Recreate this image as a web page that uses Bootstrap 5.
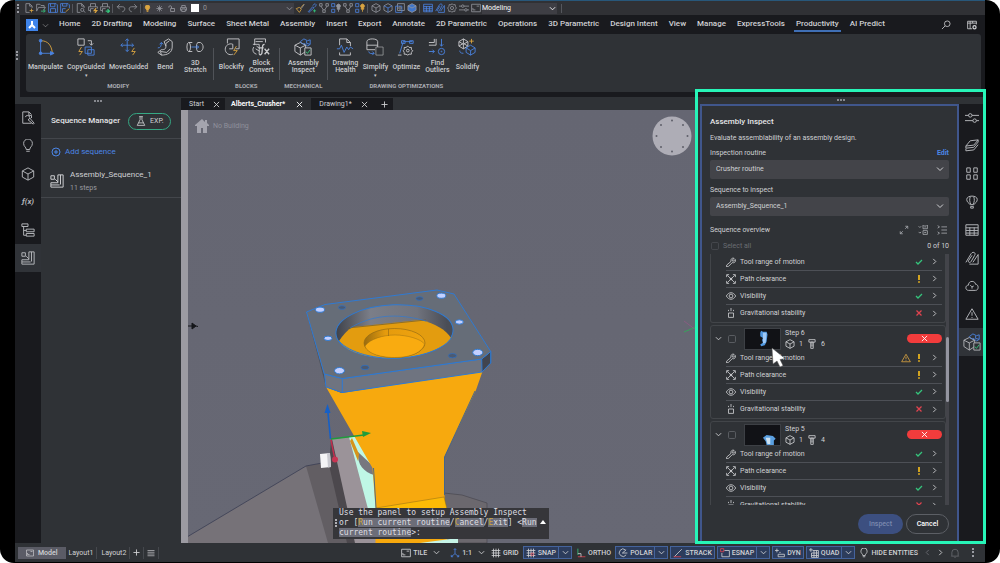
<!DOCTYPE html>
<html lang="en">
<head>
<meta charset="utf-8">
<meta name="viewport" content="width=device-width, initial-scale=1">
<title>Assembly Inspect</title>
<link rel="stylesheet" href="https://cdn.jsdelivr.net/npm/bootstrap@5.3.0/dist/css/bootstrap.min.css">
<style>
:root{--panel:#2f3236;--dark:#191a1e;--line:#43464b;--txt:#d0d1d4;--blue:#4b86e6}
body{font-family:Roboto,"Liberation Sans",sans-serif;font-size:7px;line-height:8px;color:var(--txt);background:#fff}
button,select,input{font:inherit;color:inherit}
button{background:none;border:0;padding:0}
a{color:inherit;text-decoration:none}
.frame{height:100vh;background:#000;border-radius:14px;padding:0 15px 1px;overflow:hidden}
.app{background:var(--panel);border-top:1px solid #28577a}
.ic{width:10px;height:10px;fill:none;stroke:currentColor;stroke-width:1.3;flex:none;display:block}
.ic-l{width:14px;height:14px;stroke-width:1.1}
.ic-xl{width:18px;height:18px;stroke-width:1}
.ic-s{width:7px;height:7px;stroke-width:2}
.bl{stroke:#4b83e0}.ye{stroke:#d9a441}.gr{stroke:#35c47c}.rd{stroke:#e0434f}.am{stroke:#eab41e}
/* quick access bar */
.quick{height:14px;padding-left:2px;background:#303135;color:#93959c}
.quick .ic{margin:0 1px}
.vsep{width:1px;height:9px;background:#55575d;margin:0 2px 0 1px;flex:none}
.grip{width:2px;height:9px;border-left:2px dotted #9a9ca3}
.combo{background:#3e3e44;height:11px}
.combo select{appearance:none;background:none;border:0;padding:0;height:11px;line-height:11px;outline:0}
/* ribbon */
.ribbon-wrap{margin-left:5px;background:var(--dark);height:82px;padding:0 4px 5px 6px}
.tabs{height:19px;padding-top:1px}
.tabs a{padding:0 5px 0 6px;height:16px;line-height:15px;font-size:8px;font-weight:500;white-space:nowrap}
.tabs a.on{box-shadow:inset 0 -2px #3f6fb5;padding:0 2px;margin:0 3px 0 4px}
.applogo{width:12px;height:12px;background:#3f84ea;margin-top:3px}
.ribbon{height:58px;background:var(--panel);border-radius:3px}
.tool{min-width:26px;font-weight:500;line-height:7px;color:#c9cacd}
.tool .lbl{height:14px;margin-top:4px}
.tool .more{height:3px;line-height:3px;font-size:5px}
.tools{gap:4px}
.grp{padding:4px 5px 0;height:58px}
.grp:first-child{padding-left:2px}
.grp+.grp::before{content:"";position:absolute;left:0;top:14px;height:32px;border-left:1px solid #505358}
.grp-name{font-size:6px;line-height:8px;font-weight:700;color:#a9abb1;margin-top:auto;margin-bottom:2px}
/* docks */
.strip{height:7px}
.hgrip{width:8px;border-top:2px dotted #86888e}
.rail{background:var(--dark);color:#b4b6ba}
.rail button{height:28px;width:100%;font-size:8px}
.rail button.on{background:#303338}
.seq{width:140px}
.seq-head{height:35px;border-bottom:1px solid var(--line);padding-left:10px}
h1,h2{font-size:8px;line-height:10px;font-weight:500;margin:0;color:#e4e5e7}
.exp{border:1px solid #36a884;border-radius:9px;height:17px;padding:0 6px 0 7px}
.seq-add{color:var(--blue);height:26px;padding-left:10px;gap:4px;font-size:8px}
.seq-row{height:33px;border-bottom:1px solid var(--line);padding-left:9px;gap:6px}
.seq-name{font-size:8px}
.doctabs{height:13px;padding-top:1px}
.doctabs div{background:var(--dark);height:12px;white-space:nowrap;padding:0 5px 0 8px;gap:9px}
.doctabs .cur{background:#2b2d31;font-weight:700;padding:0 8px 0 6px;gap:11px}
.canvas{background:#656672;border-left:7px solid #9c9ba2}
.scene{inset:0}
.nobuild{color:#8f909b;padding:9px 7px}
.compass{right:4px;top:6px;width:40px;height:40px}
.cmd{left:145px;bottom:4px;background:#36363a;width:216px;height:31px;font-family:"DejaVu Sans Mono",monospace;font-size:8px;line-height:10px;color:#dedee2;white-space:pre;padding:0 0 0 6px}
.cmd mark,.cmd i{background:#6c6d78;color:inherit;padding:0;line-height:9px}
.cmd i{font-style:normal;color:#cba63e}
.cmd .vdots{left:2px;top:11px;height:8px;border-left:2px dotted #b0b0b6}
.cmd .up{right:3px;top:12px}
/* inspect */
.dock{width:289px}
.hilite{inset:-8px -1px -1px -1px;border:3px solid #27f5b8;pointer-events:none;z-index:5}
.inspect{margin-left:4px;width:259px;border:2px solid #40568c;border-bottom:0;padding:11px 8px 9px 8px}
.fld{height:20px;line-height:18px;min-height:0;background-color:#434449;border:0;border-radius:2px;color:var(--txt);font-size:7px;padding:0 16px 0 6px;background-position:right 5px center;background-size:8px 8px;background-image:url("data:image/svg+xml,%3csvg xmlns='http://www.w3.org/2000/svg' viewBox='0 0 16 16'%3e%3cpath fill='none' stroke='%23d0d1d4' stroke-width='2' d='m2 5 6 6 6-6'/%3e%3c/svg%3e")}
.ck{width:8px;height:8px;min-height:0;margin:0;border:1px solid #595c61;border-radius:1px;background:none;flex:none}
.steps{min-height:0}
.step{border:1px solid #424549;border-radius:3px;margin-bottom:2px}
.step.cut{border-top:0;border-radius:0 0 3px 3px}
.step-head{height:24px;padding:2px 3px 0 4px}
.step-head .ck{margin:0 8px 0 6px}
.thumb{width:37px;height:22px;background:#111216;border:1px solid #3d4045;flex:none}
.bad{background:#f23c3c;color:#fff;width:35px;height:9px;border-radius:5px}
.chk{height:17px;margin:0 3px 0 15px;padding:0 4px 0 0;border-bottom:1px solid #4d5056}
.chk:last-child{border-bottom:0}
.chk .st{width:8px;height:8px;margin-right:8px;stroke-width:2.5}
.sbar{width:3px;background:#43444a;position:relative}
.sbar div{position:absolute;top:33%;height:26%;width:3px;background:#9495a0;border-radius:2px}
.pill{height:20px;border-radius:10px;width:45px;font-weight:500}
.pill.go{background:#3c4f80;color:#7b89ae}
.pill.no{border:1px solid #5c5f65;width:43px;color:#fff}
.cursor{left:60px;top:21px;width:16px;height:21px;z-index:3}
/* status bar */
.status{height:19px;white-space:nowrap;font-weight:500;padding:0 11px 0 3px}
.status .lay{height:12px;padding:0 3px;border-right:1px solid #45484d;font-weight:400}
.status .lay.on{background:#5b5c66;font-weight:500;padding:0 8px;border:0}
.tg{height:13px;padding:0 2px;gap:2px}
.tg.on{background:#2c3c5c;border:1px solid #44639c}
.tg .ch{border-left:1px solid #44639c;height:11px;padding:0 2px 0 3px}
</style>
</head>
<body>
<svg width="0" height="0" class="position-absolute" aria-hidden="true"><defs>
<symbol id="down" viewBox="0 0 16 16"><path d="m2 5 6 6 6-6"/></symbol>
<symbol id="right" viewBox="0 0 16 16"><path d="m5 2 6 6-6 6"/></symbol>
<symbol id="left" viewBox="0 0 16 16"><path d="m11 2-6 6 6 6"/></symbol>
<symbol id="x" viewBox="0 0 16 16"><path d="m2 2 12 12M14 2 2 14"/></symbol>
<symbol id="plus" viewBox="0 0 16 16"><path d="M8 1v14M1 8h14"/></symbol>
<symbol id="menu" viewBox="0 0 16 16"><path d="M1 3h14M1 6.500h14M1 10h14M1 13.500h14"/></symbol>
<symbol id="ok" viewBox="0 0 16 16"><path d="m2 8 4 4 8-8"/></symbol>
<symbol id="bang" viewBox="0 0 16 16"><path stroke-width="3.500" d="M8 0v10M8 12.500v3"/></symbol>
<symbol id="no" viewBox="0 0 16 16"><path d="m3 3 10 10M13 3 3 13"/></symbol>
<symbol id="doc" viewBox="0 0 16 16"><path d="M9 1H3v14h6M9 1l4 4v3M9 1v4h4"/><path class="ye" d="M12 9v6M9 12h6"/></symbol>
<symbol id="open" viewBox="0 0 16 16"><path d="M1 13V2h5l2 2h5v3M1 13l3-6h11l-3 5"/><path class="gr" d="M8 13h6M12 10l3 3-3 2"/></symbol>
<symbol id="save" viewBox="0 0 16 16"><path class="bl" d="M1 1h12l2 2v12H1zM4 1v5h7V1M4 15V9h8v6"/></symbol>
<symbol id="saveas" viewBox="0 0 16 16"><path class="bl" d="M9 15H1V1h12l2 2v5M4 1v4h7V1M4 15V9h5"/><path class="ye" d="m9 14 6-5"/></symbol>
<symbol id="find" viewBox="0 0 16 16"><path d="M7 15H2V1h7l4 4v3M9 1v4h4"/><circle cx="10" cy="11" r="2.500"/><path d="m12 13 3 2"/></symbol>
<symbol id="print" viewBox="0 0 16 16"><path d="M4 6V1h8v5M4 12H1V6h14v6h-3M4 9h8v6H4z"/></symbol>
<symbol id="printy" viewBox="0 0 16 16"><path d="M4 6V1h8v5M4 12H1V6h14v3M4 15V9h5"/><path class="ye" stroke-width="2" d="m13 8-3 4h4l-3 4"/></symbol>
<symbol id="printg" viewBox="0 0 16 16"><path d="M4 6V1h8v5M4 12H1V6h14v3M4 15V9h5"/><path class="gr" stroke-width="2" d="M9 13h6m-3-3 3 3-3 3"/></symbol>
<symbol id="undo" viewBox="0 0 16 16"><path d="M6 2 2 6l4 4M2 6h8c6 0 5 7 0 8"/></symbol>
<symbol id="redo" viewBox="0 0 16 16"><path d="m10 2 4 4-4 4M14 6H6c-6 0-5 7 0 8"/></symbol>
<symbol id="bulb" viewBox="0 0 16 16"><path d="M6 12c0-3-3-3-3-7a5 5 0 0 1 10 0c0 4-3 4-3 7zM6 14h4"/></symbol>
<symbol id="bulbon" viewBox="0 0 16 16"><path class="ye" fill="#d9a441" d="M6 12c0-3-3-3-3-7a5 5 0 0 1 10 0c0 4-3 4-3 7zM6 15h4"/></symbol>
<symbol id="sun" viewBox="0 0 16 16"><circle cx="8" cy="8" r="3" fill="currentColor"/><path d="M8 1v3M8 12v3M1 8h3M12 8h3M3 3l2 2M11 11l2 2M13 3l-2 2M5 11l-2 2"/></symbol>
<symbol id="lock" viewBox="0 0 16 16"><path d="M6 8h9v7H6zM8 8V4c0-3-6-3-6 0v2"/></symbol>
<symbol id="brush" viewBox="0 0 16 16"><path class="ye" d="m2 9 5-2 3 3-3 5zM9 8l5-6"/><path d="m10 9 5-7"/></symbol>
<symbol id="pick" viewBox="0 0 16 16"><path class="bl" d="m2 14 7-8 2 2-8 7zM9 4l4-3 2 2-3 4"/><path class="gr" d="M12 10v5M9.500 12.500h5"/></symbol>
<symbol id="tree" viewBox="0 0 16 16"><path d="M1 1h4v4H1zM11 1h4v4h-4zM6 11h4v4H6zM3 5l4 6M13 5l-4 6"/></symbol>
<symbol id="light" viewBox="0 0 16 16"><path class="bl" d="M1 1h5v5H1zM1 10h5v5H1z"/><path d="M12 14v-4M10 7a3 3 0 1 1 4 0v3h-4z" fill="currentColor"/></symbol>
<symbol id="lighty" viewBox="0 0 16 16"><path class="bl" d="M1 1h5v5H1zM1 10h5v5H1z"/><path class="ye" fill="#d9a441" d="M12 14v-4M10 7a3 3 0 1 1 4 0v3h-4z"/></symbol>
<symbol id="cube" viewBox="0 0 16 16"><path d="m8 1 6.500 3.500v7L8 15l-6.500-3.500v-7zM1.500 4.500 8 8l6.500-3.500M8 8v7"/></symbol>
<symbol id="cubeb" viewBox="0 0 16 16"><path d="m8 1 6.500 3.500v7L8 15l-6.500-3.500v-7z"/><path class="bl" d="M1.500 4.500 8 8l6.500-3.500M8 8v7"/></symbol>
<symbol id="boxes" viewBox="0 0 16 16"><path d="M4 1h11v11H4z"/><path class="bl" d="M1 5h10v10H1z"/><circle cx="8" cy="8" r="2"/></symbol>
<symbol id="cubef" viewBox="0 0 16 16"><path d="m8 1 6.500 3.500v7L8 15l-6.500-3.500v-7z" fill="#3f75c9"/><path d="M1.500 4.500 8 8l6.500-3.500"/></symbol>
<symbol id="table" viewBox="0 0 16 16"><path d="M1 2h14v12H1zM1 5.500h14M1 8.500h14M1 11.500h14M5.500 5v9M10.500 5v9"/></symbol>
<symbol id="clips" viewBox="0 0 16 16"><path d="M1 13 7 3c2-3 6-1 4 2l-4 7c-1 2-4 1-3-1l4-6M5 15h10V4l-6 9"/></symbol>
<symbol id="gear" viewBox="0 0 16 16"><circle cx="8" cy="8" r="2.500"/><path d="m8 1 2 2 3-.5.5 3L15 8l-2 2.500-.5 3-3-.5L8 15l-2-2-3 .5-.5-3L1 8l2-2.500.5-3 3 .5z"/></symbol>
<symbol id="sliders" viewBox="0 0 16 16"><path d="M0 5h4M8 5h8M0 11h9M13 11h3"/><circle cx="6" cy="5" r="2"/><circle cx="11" cy="11" r="2"/></symbol>
<symbol id="win" viewBox="0 0 16 16"><path d="M1 2h14v12H1zM3 11V8M3 11h4M13 5H9"/></symbol>
<symbol id="search" viewBox="0 0 16 16"><circle cx="10" cy="6" r="4.500"/><path d="m6.500 9.500-5 5"/></symbol>
<symbol id="uiset" viewBox="0 0 16 16"><path d="M8 14H1V2h14v5M1 5h14M5 5v9M5 2v3M9 2v3"/><circle cx="12" cy="11.500" r="2.500" stroke-width="2"/></symbol>
<symbol id="manip" viewBox="0 0 20 20"><path class="ye" d="M4 3c9 0 12 6 13 13"/><path class="bl" d="M4 4v13h12"/><g fill="#4b83e0" class="bl"><circle cx="4" cy="3" r="1.500"/><circle cx="4" cy="17" r="1.500"/><path d="m15 15 4 2-4 2z"/></g></symbol>
<symbol id="copyg" viewBox="0 0 20 20"><path d="M1 1h7v7H1zM12 3h4v5M14 6l2 2 2-2"/><path class="ye" d="m5 10-3 5h4l-3 4"/><path class="bl" d="M9 10h7v7H9zM12 13h7v6h-7z"/></symbol>
<symbol id="moveg" viewBox="0 0 20 20"><path class="bl" d="M8 1v14M1 8h14M6 3l2-2 2 2M6 13l2 2 2-2M3 6 1 8l2 2M13 6l2 2-2 2"/><path class="ye" d="m16 11-3 4h4l-3 4"/></symbol>
<symbol id="bend" viewBox="0 0 20 20"><path d="m9 4 5-3 4 3v6c0 6-5 9-12 9l-4-3 4-3c4 0 5-1 5-4zM11 9V6l4-3M6 19l-1-4 7 1 4-4"/><path class="bl" d="M2 11c3 0 4-2 4-6M4 7l2-2 2 2"/></symbol>
<symbol id="stretch" viewBox="0 0 20 20"><ellipse cx="3" cy="10" rx="2" ry="5"/><path d="M3 5h4M3 15h4M13 5h3c4 2 4 8 0 10h-3M13 5c-2 2-2 8 0 10"/><path class="bl" d="M6 10h8M12 8l2 2-2 2"/></symbol>
<symbol id="blockify" viewBox="0 0 20 20"><path d="M6 6V1h13v11h-4M12 18a6 6 0 1 1 0-11v5H8"/><path class="ye" d="m16 9-3 5h4l-4 5"/></symbol>
<symbol id="blockc" viewBox="0 0 20 20"><path d="M3 8V1h12v4M1 7h7v11M5 18a5 5 0 0 1-3-8M4 4h8M5 9l4 3M4 12l5 3"/><path stroke-width="1.500" d="M14 7c-3 0-2 2-3 10-1 2-2 2-3 1M8 11h5M14 12l5 6M19 12l-5 6"/></symbol>
<symbol id="inspect" viewBox="0 0 20 20"><path d="m7 5 6 3v7l-6 4-6-4V8zM1 8l6 3 6-3M7 11v8"/><path class="bl" d="m7 4 4-3 4 2 3-1v5l-3 2-3-3-2 1zM14 3v3l4 1"/><path fill="#2f3236" d="M12 11h7v8h-7z"/><path class="gr" d="m13 15 2 2 3-4"/></symbol>
<symbol id="health" viewBox="0 0 20 20"><path d="M4 8V1h8l4 4v4M12 1v4h4M4 16v3h12v-3"/><path class="bl" d="M1 12h3l2-4 3 8 3-6 2 3 2-3 3 2"/></symbol>
<symbol id="simplify" viewBox="0 0 20 20"><path d="M1 13V4c0-4 12-4 12 0v6M1 8h12M1 13h9"/><path d="M11 10h8v9h-8z" opacity=".6"/><path class="bl" d="M3 15c0 2 3 3 6 2M7 15l2 2-2 2"/></symbol>
<symbol id="optimize" viewBox="0 0 20 20"><path class="bl" d="m3 17 4-13h10M5 3h4v3H5zM14 3h4v3h-4z"/><path d="M1 19h4M12 9l1.500 1.500H16V13l1.500 1-1.500 2v2h-2.500L12 19l-2-1H8v-2l-1-2 1-1v-2.500h2z"/><circle cx="12" cy="14" r="1.500"/></symbol>
<symbol id="outliers" viewBox="0 0 20 20"><path d="M1 5h6V1M1 8h8V1"/><path class="bl" d="M15 1v8M13 7l2 2 2-2M1 15h6M5 13l2 2-2 2"/><circle class="bl" cx="15" cy="15" r="3.500"/><circle class="bl" cx="15" cy="15" r=".5"/></symbol>
<symbol id="solidify" viewBox="0 0 20 20"><path d="m6 1 5 3v5l-5 3-5-3V4zM1 4l5 3 5-3M6 7v5M1 9l5-3 5 3M6 1v5"/><path class="ye" d="M15 1v5M12.500 3.500h5"/><path class="bl" d="m14 8 5 3v5l-5 3-5-3v-5zM9 11l5 3 5-3M14 14v5M2 14c0 2 1 3 4 3"/></symbol>
<symbol id="docwr" viewBox="0 0 16 16"><path d="M12 14H2V1h7l3 3M9 1v4h3v3M5 7a2.500 2.500 0 1 1 3 3l6 5 1-1-5-6"/></symbol>
<symbol id="tree2" viewBox="0 0 16 16"><path d="M1 1h7v3H1zM6 7h9v3H6zM6 12h9v3H6zM3 4v10h3M3 8.500h3"/></symbol>
<symbol id="seqi" viewBox="0 0 16 16"><path d="M1 2h4v4H1zM1 10h8V1h6v14H1zM12 1v11M1 12.500h10M6 6l3 3"/></symbol>
<symbol id="layers" viewBox="0 0 16 16"><path d="m6 2 9-1-5 6-9 1zM1 8v2.500l9-1 5-6V1M1 11v2.500l9-1 5-6"/></symbol>
<symbol id="four" viewBox="0 0 16 16"><path d="M2 1h4v5H2zM10 1h4v5h-4zM2 9h4v5H2zM10 9h4v5h-4z"/></symbol>
<symbol id="balloon" viewBox="0 0 16 16"><path d="M6 11C4 9 2 8 2 5c0-5 12-5 12 0 0 3-2 4-4 6zM6 2c-1 3-1 6 1 9M10 2c1 3 1 6-1 9M6.500 13h3v2h-3z"/></symbol>
<symbol id="cloud" viewBox="0 0 16 16"><path d="M4 13c-4 0-4-6 0-6 0-6 8-5 8-1 4 0 4 7 0 7zM6 7l2 2 2-1M8 9v2"/></symbol>
<symbol id="warn" viewBox="0 0 16 16"><path d="M8 2 1 14h14zM8 6v4M8 11.500v1"/></symbol>
<symbol id="flask" viewBox="0 0 16 16"><path d="M5 1h6M6.500 1v5L2 15h12L9.500 6V1M4 11h8"/></symbol>
<symbol id="wrench" viewBox="0 0 16 16"><path d="M1 13 8 7c-1-4 2-6 5-5l-3 3 1 2 4-3c1 4-2 6-5 5l-6 6-3 1z"/></symbol>
<symbol id="path" viewBox="0 0 16 16"><path d="m2 2 12 12M14 2 2 14M1 5V1h4M11 1h4v4M15 11v4h-4M5 15H1v-4"/><circle cx="8" cy="8" r="1.500"/></symbol>
<symbol id="eye" viewBox="0 0 16 16"><path d="M.5 8c4-7 11-7 15 0-4 7-11 7-15 0z"/><circle cx="8" cy="8" r="3"/></symbol>
<symbol id="grav" viewBox="0 0 16 16"><path d="M4 8h8v7H4zM4 5V3M8 5V0M12 5V3"/></symbol>
<symbol id="bolt" viewBox="0 0 16 16"><path d="M3 1h10v4H3zM6 5h4v10H6zM6 8h4M6 11h4"/></symbol>
<symbol id="expand" viewBox="0 0 16 16"><path d="m10 6 4-4M10 2h4v4M6 10l-4 4M2 10v4h4"/></symbol>
<symbol id="expall" viewBox="0 0 16 16"><path d="M8 0h7v6H8zM8 9h7v6H8zM10 3h3M10 12h3M1 2l2 2 2-2M1 11l2 2 2-2"/></symbol>
<symbol id="colall" viewBox="0 0 16 16"><path d="M7 3h9M7 8h9M7 13h9M1 1l3 2-3 2M1 11l3 2-3 2"/></symbol>
<symbol id="axes" viewBox="0 0 16 16"><path class="bl" d="M8 1v8l-6 5M8 9l6 5M6 3l2-2 2 2M2 11v3h3M14 11v3h-3"/></symbol>
<symbol id="grid" viewBox="0 0 16 16"><path d="M4 1v14M8 1v14M12 1v14M1 4h14M1 8h14M1 12h14"/></symbol>
<symbol id="snap" viewBox="0 0 16 16"><path d="M4 1v14M8 1v14M12 1v14M1 4h14M1 8h14M1 12h14"/><circle class="rd" cx="10" cy="10" r="2"/></symbol>
<symbol id="ortho" viewBox="0 0 16 16"><path class="gr" d="M3 1v10"/><path class="rd" d="M3 14h12"/><path d="M3 9h5v5"/></symbol>
<symbol id="polar" viewBox="0 0 16 16"><path d="M13 11a6 6 0 1 1-1-8M7 8h8M7 8l6-5"/></symbol>
<symbol id="strack" viewBox="0 0 16 16"><path d="M2 14 14 2"/><path class="rd" d="M1 14h12"/></symbol>
<symbol id="esnap" viewBox="0 0 16 16"><path d="M7 4h8v10H3V8"/><path class="rd" d="M1 1h5v5H1z"/></symbol>
<symbol id="dyn" viewBox="0 0 16 16"><path d="M3 1v6M0 4h6M5 10h10v4H5zM7 7h2"/></symbol>
<symbol id="quad" viewBox="0 0 16 16"><path d="M3 0v6M0 3h6M6 4h9v11H4V8M4 8h11M8 4v11M12 4v11M4 12h11"/></symbol>
<symbol id="bell" viewBox="0 0 16 16"><path d="M3 12V7a5 5 0 0 1 10 0v5l1 1H2zM7 15h2"/></symbol>
</defs></svg>

<div class="frame">
<div class="app d-flex flex-column h-100">

<div class="quick d-flex align-items-center flex-shrink-0">
  <span class="grip me-1"></span>
  <svg class="ic"><use href="#doc"/></svg><svg class="ic"><use href="#open"/></svg><svg class="ic"><use href="#save"/></svg><svg class="ic"><use href="#saveas"/></svg>
  <span class="vsep"></span>
  <svg class="ic"><use href="#find"/></svg><svg class="ic"><use href="#printy"/></svg><svg class="ic"><use href="#printg"/></svg>
  <span class="vsep"></span>
  <svg class="ic"><use href="#undo"/></svg><svg class="ic"><use href="#redo"/></svg>
  <span class="vsep"></span>
  <div class="combo d-flex align-items-center" style="width:151px">
    <svg class="ic ic-s"><use href="#bulbon"/></svg><svg class="ic ic-s ms-1"><use href="#sun"/></svg><svg class="ic ic-s ms-1"><use href="#lock"/></svg><svg class="ic ic-s mx-1"><use href="#print"/></svg>
    <span class="bg-white me-1" style="width:8px;height:8px"></span>
    <select class="flex-grow-1" aria-label="Layer"><option>0</option></select>
    <svg class="ic ic-s"><use href="#down"/></svg>
  </div>
  <svg class="ic"><use href="#brush"/></svg><svg class="ic"><use href="#pick"/></svg><svg class="ic"><use href="#tree"/></svg><svg class="ic"><use href="#light"/></svg><svg class="ic"><use href="#tree"/></svg><svg class="ic"><use href="#lighty"/></svg>
  <span class="vsep"></span>
  <svg class="ic"><use href="#cube"/></svg><svg class="ic"><use href="#cubeb"/></svg><svg class="ic"><use href="#boxes"/></svg><svg class="ic"><use href="#cubef"/></svg>
  <span class="vsep"></span>
  <svg class="ic bl"><use href="#table"/></svg><svg class="ic bl"><use href="#clips"/></svg><svg class="ic"><use href="#gear"/></svg><svg class="ic"><use href="#sliders"/></svg><svg class="ic"><use href="#win"/></svg>
  <div class="combo d-flex align-items-center text-light" style="width:75px">
    <select class="flex-grow-1 w-100" aria-label="Workspace"><option>Modeling</option></select>
    <svg class="ic ic-s"><use href="#down"/></svg>
  </div>
  <span class="vsep ms-1"></span>
</div>

<div class="position-relative flex-shrink-0">
<span class="grip position-absolute" style="left:1px;top:36px"></span>
<div class="ribbon-wrap">
  <nav class="tabs d-flex">
    <button class="applogo d-flex align-items-center justify-content-center" aria-label="Application menu"><svg class="ic text-white" style="stroke-width:2"><path d="M5 1v4L2 8M5 5l3 3"/></svg></button>
    <svg class="ic ic-s m-1 me-0 align-self-center" style="stroke-width:1"><use href="#down"/></svg>
    <a href="#" class="ms-1">Home</a><a href="#">2D Drafting</a><a href="#">Modeling</a><a href="#">Surface</a><a href="#">Sheet Metal</a><a href="#">Assembly</a><a href="#">Insert</a><a href="#">Export</a><a href="#">Annotate</a><a href="#">2D Parametric</a><a href="#">Operations</a><a href="#">3D Parametric</a><a href="#">Design Intent</a><a href="#">View</a><a href="#">Manage</a><a href="#">ExpressTools</a><a href="#" class="on">Productivity</a><a href="#">AI Predict</a>
    <span class="ms-auto d-flex align-items-center gap-3 pe-1"><svg class="ic"><use href="#search"/></svg><svg class="ic"><use href="#uiset"/></svg></span>
  </nav>
  <div class="ribbon d-flex text-center">
    <div class="grp position-relative d-flex flex-column">
      <div class="tools d-flex">
        <button class="tool"><svg class="ic ic-xl mx-auto"><use href="#manip"/></svg><span class="lbl d-flex align-items-center justify-content-center">Manipulate</span></button>
        <button class="tool"><svg class="ic ic-xl mx-auto"><use href="#copyg"/></svg><span class="lbl d-flex align-items-center justify-content-center position-relative">CopyGuided<span class="position-absolute more top-100">▾</span></span></button>
        <button class="tool"><svg class="ic ic-xl mx-auto"><use href="#moveg"/></svg><span class="lbl d-flex align-items-center justify-content-center">MoveGuided</span></button>
        <button class="tool"><svg class="ic ic-xl mx-auto"><use href="#bend"/></svg><span class="lbl d-flex align-items-center justify-content-center">Bend</span></button>
        <button class="tool"><svg class="ic ic-xl mx-auto"><use href="#stretch"/></svg><span class="lbl d-flex align-items-center justify-content-center">3D<br>Stretch</span></button>
      </div>
      <div class="grp-name">MODIFY</div>
    </div>
    <div class="grp position-relative d-flex flex-column">
      <div class="tools d-flex">
        <button class="tool"><svg class="ic ic-xl mx-auto"><use href="#blockify"/></svg><span class="lbl d-flex align-items-center justify-content-center">Blockify</span></button>
        <button class="tool"><svg class="ic ic-xl mx-auto"><use href="#blockc"/></svg><span class="lbl d-flex align-items-center justify-content-center">Block<br>Convert</span></button>
      </div>
      <div class="grp-name">BLOCKS</div>
    </div>
    <div class="grp position-relative d-flex flex-column">
      <div class="tools d-flex justify-content-center">
        <button class="tool"><svg class="ic ic-xl mx-auto"><use href="#inspect"/></svg><span class="lbl d-flex align-items-center justify-content-center">Assembly<br>Inspect</span></button>
      </div>
      <div class="grp-name">MECHANICAL</div>
    </div>
    <div class="grp position-relative d-flex flex-column">
      <div class="tools d-flex">
        <button class="tool"><svg class="ic ic-xl mx-auto"><use href="#health"/></svg><span class="lbl d-flex align-items-center justify-content-center">Drawing<br>Health</span></button>
        <button class="tool"><svg class="ic ic-xl mx-auto"><use href="#simplify"/></svg><span class="lbl d-flex align-items-center justify-content-center position-relative">Simplify<span class="position-absolute more top-100">▾</span></span></button>
        <button class="tool"><svg class="ic ic-xl mx-auto"><use href="#optimize"/></svg><span class="lbl d-flex align-items-center justify-content-center">Optimize</span></button>
        <button class="tool"><svg class="ic ic-xl mx-auto"><use href="#outliers"/></svg><span class="lbl d-flex align-items-center justify-content-center">Find<br>Outliers</span></button>
        <button class="tool"><svg class="ic ic-xl mx-auto"><use href="#solidify"/></svg><span class="lbl d-flex align-items-center justify-content-center">Solidify</span></button>
      </div>
      <div class="grp-name">DRAWING OPTIMIZATIONS</div>
    </div>
  </div>
</div>
</div>

<div class="d-flex flex-grow-1" style="min-height:0">
  <aside class="d-flex flex-column flex-shrink-0">
    <div class="strip d-flex align-items-center justify-content-center"><span class="hgrip"></span></div>
    <div class="d-flex flex-grow-1">
      <div class="rail" style="width:26px">
        <button class="d-flex align-items-center justify-content-center" aria-label="Drawing explorer"><svg class="ic ic-l"><use href="#docwr"/></svg></button>
        <button class="d-flex align-items-center justify-content-center" aria-label="Tips"><svg class="ic ic-l"><use href="#bulb"/></svg></button>
        <button class="d-flex align-items-center justify-content-center" aria-label="Components"><svg class="ic ic-l"><use href="#cube"/></svg></button>
        <button class="d-flex align-items-center justify-content-center fw-bold fst-italic" aria-label="Parameters">ƒ(x)</button>
        <button class="d-flex align-items-center justify-content-center" aria-label="Structure"><svg class="ic ic-l"><use href="#tree2"/></svg></button>
        <button class="on d-flex align-items-center justify-content-center" aria-label="Sequences"><svg class="ic ic-l"><use href="#seqi"/></svg></button>
      </div>
      <div class="seq">
        <div class="seq-head d-flex align-items-center"><h2>Sequence Manager</h2>
          <span class="exp d-flex align-items-center gap-1 ms-2"><svg class="ic"><use href="#flask"/></svg>EXP.</span></div>
        <a href="#" class="seq-add d-flex align-items-center"><svg class="ic"><circle cx="5" cy="5" r="4" stroke-width="1"/><path stroke-width="1" d="M5 3v4M3 5h4"/></svg>Add sequence</a>
        <div class="seq-row d-flex align-items-center"><svg class="ic ic-l"><use href="#seqi"/></svg>
          <div><div class="seq-name">Assembly_Sequence_1</div><div style="color:#9a9ca1;margin-top:5px">11 steps</div></div></div>
      </div>
    </div>
  </aside>

  <main class="d-flex flex-column flex-grow-1" style="min-width:0">
    <div class="doctabs d-flex">
      <div class="d-flex align-items-center">Start<svg class="ic ic-s"><use href="#x"/></svg></div>
      <div class="cur d-flex align-items-center text-light">Alberts_Crusher*<svg class="ic ic-s"><use href="#x"/></svg></div>
      <div class="d-flex align-items-center">Drawing1*<svg class="ic ic-s"><use href="#x"/></svg></div>
      <div class="d-flex align-items-center"><svg class="ic ic-s"><use href="#plus"/></svg></div>
    </div>
    <div class="canvas position-relative flex-grow-1 overflow-hidden">
      <svg class="scene position-absolute w-100 h-100" viewBox="188 110 508 433" preserveAspectRatio="xMinYMin slice" stroke-linejoin="round">
        <defs>
          <linearGradient id="bg" x2="0" y2="1"><stop offset="0" stop-color="#656672"/><stop offset="1" stop-color="#676874"/></linearGradient>
          <linearGradient id="wall"><stop offset="0" stop-color="#3f424a"/><stop offset=".3" stop-color="#7b7e88"/><stop offset=".7" stop-color="#70737d"/><stop offset=".95" stop-color="#4a4d56"/></linearGradient>
          <linearGradient id="inner"><stop offset="0" stop-color="#9a6c10"/><stop offset=".35" stop-color="#e59b0d"/><stop offset="1" stop-color="#f0a40f"/></linearGradient>
        </defs>
        <path fill="url(#bg)" d="M188 110h508v433H188z"/>
        <path fill="#767278" d="M306 466 187 537v8h183l-30-77-12-5z"/>
        <path fill="#625e63" d="m306 466 17-3 12 3 20 44 6 33h-33z"/>
        <path stroke="#33384f" stroke-width=".7" fill="none" d="m187 537 119-71 16-3"/>
        <path fill="#6b686e" stroke="#3c3a42" stroke-width=".5" d="m444 493 18 2 25 8v40h-50z"/>
        <path fill="#4c484d" d="m331 440 8 0 22 103h-14l-18-78z"/>
        <path fill="#9b9399" d="m332 439 18-2 24 70 8 36h-27z"/>
        <path fill="#bff7e6" d="m349 437 6-1 19 32 3 40 8 35h-8z"/>
        <path fill="#77777f" d="m358 452 16 15v8c-10-3-17-10-16-23z"/>
        <path fill="#d6941a" d="m352 438 7 16-1 7-8-20z"/>
        <path fill="#f7a90e" d="m326 387 16 6 141-23-7 20-31.500 67V497l3 46h-72V508l-3-40z"/>
        <path fill="#fdbb06" stroke="#8f6a17" stroke-width=".5" d="m376 508 68-11 3 12-71 10z"/>
        <path fill="#c6f5e8" d="m420 543 38-5v5z"/>
        <path stroke="#2a5a9c" stroke-width=".8" fill="none" d="m373.500 468 2.500 40M475 391l-30.500 66v38"/>
        <path fill="#50545e" d="m306.500 312 1 4 18.500 71 16 6v-14l-18-5z"/>
        <path fill="#6f7480" stroke="#2f7ad2" d="m324.500 374 18 4.500L481.700 359l9-7.500v11.500L482 372l-140 20.500-16-5.500z"/>
        <path fill="#41444e" stroke="#2f7ad2" d="m481.700 359 9-7.500v11.500L482 372z"/>
        <path fill="#666d78" stroke="#2f7ad2" d="m306.500 312 18.500-7.500 112-14.500 17 4 36.700 57.500-9 7.500-139.400 19.500-18-4.500z"/>
        <path stroke="#2f7ad2" fill="none" d="M342.300 378v14.500"/>
        <g transform="rotate(-2 394.500 331.500)"><ellipse cx="394.500" cy="331.500" rx="58.600" ry="26.700" fill="url(#wall)" stroke="#2f7ad2"/></g>
        <path fill="#e39c0f" d="M339 341c4-6 8-11 14-14l67-7c15 3 26 10 31 18-4 8-24 18-50 20-30 2-55-6-62-17z"/>
        <path fill="none" stroke="#6a5a30" stroke-width=".7" d="m348 328 78-8"/>
        <path fill="none" stroke="#2f7ad2" d="M339 341c10 12 38 19 62 17 26-2 45-11 50-20"/>
        <path fill="none" stroke="#2f7ad2" stroke-width=".7" d="M350 328c20-12 45-16 76-7"/>
        <ellipse cx="394.500" cy="343" rx="30.500" ry="14.500" fill="url(#inner)" stroke="#8c6514" stroke-width=".6"/>
        <path fill="#f9ab10" stroke="#8c6514" stroke-width=".4" d="M365 346c5-7 18-11 30-11s26 4 29.500 9c-2 8-13 13.500-30 13.500-16 0-28-5-29.500-11.500z"/>
        <path stroke="#8c6514" stroke-width=".6" d="M388.500 329v7"/>
        <g fill="#c3d0ff" stroke="#2f7ad2"><ellipse cx="320" cy="309.700" rx="4.500" ry="2.600"/><ellipse cx="441.300" cy="295.700" rx="4.500" ry="2.600"/><ellipse cx="459.300" cy="322" rx="4" ry="2.200"/><ellipse cx="477.700" cy="352.500" rx="5" ry="3.200"/><ellipse cx="339.500" cy="370.700" rx="5" ry="3.200"/><ellipse cx="328" cy="338.300" rx="4" ry="2.200"/></g>
        <g fill="#4b5a72" stroke="#2f6fc0" stroke-width=".8"><ellipse cx="342" cy="307.500" rx="3.500" ry="1.800"/><ellipse cx="419.500" cy="298.500" rx="3.500" ry="1.800"/><ellipse cx="452.500" cy="355.700" rx="4" ry="2.200"/><ellipse cx="365" cy="367.500" rx="4" ry="2.200"/></g>
        <path stroke="#1560c8" stroke-width="1.600" d="m330.500 439-2.500-26"/><path fill="#1560c8" d="m327.500 404 3 9h-6z"/>
        <path stroke="#1f9c3c" stroke-width="1.400" d="m331 439 33-4"/><path fill="#1f9c3c" d="m371 433-8 4-1-6z"/>
        <path stroke="#c32d4e" stroke-width="1.400" d="m331 440 4 20"/><circle cx="335" cy="459.500" r="3" fill="#c83552"/>
        <path fill="#f4f4f6" d="m320 454 10-1 1 14-10 1z"/><path fill="#c9c9d0" d="m327 453 3 0 1 14-3 .5z"/>
        <path stroke="#15161a" fill="#15161a" d="M188 326h4m4 0 2 .5M192 323l4 3-4 3z"/>
        <path stroke="#37a35c" fill="none" d="m684 332 12-5"/><path stroke="#a0568c" stroke-width=".6" d="m684 321 12 9"/>
      </svg>
      <div class="nobuild position-relative d-flex align-items-center gap-1"><svg width="14" height="14" viewBox="0 0 14 14" fill="#a4a4ae"><path d="M7 0 0 6v1h2v7h4V9h2v5h4V7h2V6l-2-2V1h-2v2z"/></svg>No Building</div>
      <svg class="compass position-absolute" viewBox="0 0 40 40"><circle cx="20" cy="20" r="19.500" fill="#aeadb6"/><g fill="#5e5f69"><circle cx="20" cy="4.500" r="1"/><circle cx="31" cy="9" r="1"/><circle cx="35.500" cy="20" r="1"/><circle cx="31" cy="31" r="1"/><circle cx="20" cy="35.500" r="1"/><circle cx="9" cy="31" r="1"/><circle cx="4.500" cy="20" r="1"/><circle cx="9" cy="9" r="1"/></g></svg>
      <div class="cmd position-absolute"><span class="vdots position-absolute"></span><div>Use the panel to setup Assembly Inspect</div><div>or [<i>R</i><mark>un current routine</mark>/<i>C</i><mark>ancel</mark>/<i>E</i><mark>xit</mark>] &lt;<mark>Run</mark></div><div><mark>current routine</mark>&gt;:</div><svg class="up position-absolute" width="6" height="4"><path fill="#fff" d="m3 0 3 4H0z"/></svg></div>
    </div>
  </main>

  <aside class="dock position-relative d-flex flex-column flex-shrink-0">
    <div class="hilite position-absolute"></div>
    <div class="strip d-flex align-items-center justify-content-center"><span class="hgrip"></span></div>
    <div class="d-flex flex-grow-1" style="min-height:0">
      <section class="inspect d-flex flex-column">
        <h1>Assembly Inspect</h1>
        <div style="margin-top:7px">Evaluate assemblability of an assembly design.</div>
        <div class="d-flex justify-content-between" style="margin:7px 0 3px"><label for="routine">Inspection routine</label><a href="#" class="fw-bold" style="color:var(--blue)">Edit</a></div>
        <select id="routine" class="form-select fld"><option>Crusher routine</option></select>
        <label for="sequence" style="margin:7px 0 3px">Sequence to inspect</label>
        <select id="sequence" class="form-select fld"><option>Assembly_Sequence_1</option></select>
        <div class="d-flex align-items-center" style="margin-top:9px;height:10px"><span class="me-auto">Sequence overview</span>
          <span class="d-flex" style="gap:9px;color:#a9abb0;margin-right:2px"><svg class="ic"><use href="#expand"/></svg><svg class="ic"><use href="#expall"/></svg><svg class="ic"><use href="#colall"/></svg></span></div>
        <div class="d-flex align-items-center" style="margin-top:7px;height:8px;padding-left:1px"><input type="checkbox" class="form-check-input ck" id="all" disabled><label for="all" class="me-auto ms-1" style="color:#6a6d72">Select all</label>0 of 10</div>
        <div class="steps d-flex flex-grow-1 overflow-hidden" style="margin-top:4px">
          <div class="flex-grow-1">
            <div class="step cut">
              <div class="chk d-flex align-items-center"><svg class="ic"><use href="#wrench"/></svg><span class="ms-1 me-auto">Tool range of motion</span><svg class="ic ic-s st gr"><use href="#ok"/></svg><svg class="ic ic-s"><use href="#right"/></svg></div>
              <div class="chk d-flex align-items-center"><svg class="ic"><use href="#path"/></svg><span class="ms-1 me-auto">Path clearance</span><svg class="ic ic-s st am"><use href="#bang"/></svg><svg class="ic ic-s"><use href="#right"/></svg></div>
              <div class="chk d-flex align-items-center"><svg class="ic"><use href="#eye"/></svg><span class="ms-1 me-auto">Visibility</span><svg class="ic ic-s st gr"><use href="#ok"/></svg><svg class="ic ic-s"><use href="#right"/></svg></div>
              <div class="chk d-flex align-items-center"><svg class="ic"><use href="#grav"/></svg><span class="ms-1 me-auto">Gravitational stability</span><svg class="ic ic-s st rd"><use href="#no"/></svg><svg class="ic ic-s"><use href="#right"/></svg></div>
            </div>
            <div class="step position-relative">
              <svg class="cursor position-absolute" viewBox="0 0 16 21"><path fill="#fff" stroke="#555" stroke-width=".5" d="m1 1 1 16 4-3 3 6 3-1.500-3-6 5-1z"/></svg>
              <div class="step-head d-flex align-items-center"><svg class="ic ic-s"><use href="#down"/></svg><input type="checkbox" class="form-check-input ck" aria-label="Step 6">
                <svg class="thumb" viewBox="0 0 37 22"><path fill="#4f97e0" d="M16 4l1-2 2 1h4l1 3-1 8-2 4-4 1-1-2 3-2-1-3 1-2-3-2z"/><path fill="#9fc9f5" d="M19 4h4l-1 11-3 1z"/></svg>
                <div class="ms-1 me-auto"><div>Step 6</div><div class="d-flex align-items-center" style="gap:4px;margin-top:2px"><svg class="ic"><use href="#cube"/></svg>1<svg class="ic"><use href="#bolt"/></svg>6</div></div>
                <span class="bad d-flex align-items-center justify-content-center"><svg class="ic ic-s"><use href="#x"/></svg></span></div>
              <div class="chk d-flex align-items-center"><svg class="ic"><use href="#wrench"/></svg><span class="ms-1 me-auto">Tool range of motion</span><svg class="ic ye me-1"><use href="#warn"/></svg><svg class="ic ic-s st am"><use href="#bang"/></svg><svg class="ic ic-s"><use href="#right"/></svg></div>
              <div class="chk d-flex align-items-center"><svg class="ic"><use href="#path"/></svg><span class="ms-1 me-auto">Path clearance</span><svg class="ic ic-s st am"><use href="#bang"/></svg><svg class="ic ic-s"><use href="#right"/></svg></div>
              <div class="chk d-flex align-items-center"><svg class="ic"><use href="#eye"/></svg><span class="ms-1 me-auto">Visibility</span><svg class="ic ic-s st gr"><use href="#ok"/></svg><svg class="ic ic-s"><use href="#right"/></svg></div>
              <div class="chk d-flex align-items-center"><svg class="ic"><use href="#grav"/></svg><span class="ms-1 me-auto">Gravitational stability</span><svg class="ic ic-s st rd"><use href="#no"/></svg><svg class="ic ic-s"><use href="#right"/></svg></div>
            </div>
            <div class="step">
              <div class="step-head d-flex align-items-center"><svg class="ic ic-s"><use href="#down"/></svg><input type="checkbox" class="form-check-input ck" aria-label="Step 5">
                <svg class="thumb" viewBox="0 0 37 22"><path fill="#5a9fe0" d="m19 14 4-3 7 1 3 3-2 2v5h-8l-1-4z"/><path fill="#cfe3f2" d="M22 14h5v7h-3z"/></svg>
                <div class="ms-1 me-auto"><div>Step 5</div><div class="d-flex align-items-center" style="gap:4px;margin-top:2px"><svg class="ic"><use href="#cube"/></svg>1<svg class="ic"><use href="#bolt"/></svg>4</div></div>
                <span class="bad d-flex align-items-center justify-content-center"><svg class="ic ic-s"><use href="#x"/></svg></span></div>
              <div class="chk d-flex align-items-center"><svg class="ic"><use href="#wrench"/></svg><span class="ms-1 me-auto">Tool range of motion</span><svg class="ic ic-s st gr"><use href="#ok"/></svg><svg class="ic ic-s"><use href="#right"/></svg></div>
              <div class="chk d-flex align-items-center"><svg class="ic"><use href="#path"/></svg><span class="ms-1 me-auto">Path clearance</span><svg class="ic ic-s st am"><use href="#bang"/></svg><svg class="ic ic-s"><use href="#right"/></svg></div>
              <div class="chk d-flex align-items-center"><svg class="ic"><use href="#eye"/></svg><span class="ms-1 me-auto">Visibility</span><svg class="ic ic-s st gr"><use href="#ok"/></svg><svg class="ic ic-s"><use href="#right"/></svg></div>
              <div class="chk d-flex align-items-center"><svg class="ic"><use href="#grav"/></svg><span class="ms-1 me-auto">Gravitational stability</span><svg class="ic ic-s st rd"><use href="#no"/></svg><svg class="ic ic-s"><use href="#right"/></svg></div>
            </div>
          </div>
          <div class="sbar"><div></div></div>
        </div>
        <div class="d-flex justify-content-end" style="gap:3px;margin-top:9px"><button class="pill go" disabled>Inspect</button><button class="pill no">Cancel</button></div>
      </section>
      <div class="rail flex-grow-1">
        <button class="d-flex align-items-center justify-content-center" aria-label="Properties"><svg class="ic ic-l"><use href="#sliders"/></svg></button>
        <button class="d-flex align-items-center justify-content-center" aria-label="Layers"><svg class="ic ic-l"><use href="#layers"/></svg></button>
        <button class="d-flex align-items-center justify-content-center" aria-label="Library"><svg class="ic ic-l"><use href="#four"/></svg></button>
        <button class="d-flex align-items-center justify-content-center" aria-label="Materials"><svg class="ic ic-l"><use href="#balloon"/></svg></button>
        <button class="d-flex align-items-center justify-content-center" aria-label="Sheets"><svg class="ic ic-l"><use href="#table"/></svg></button>
        <button class="d-flex align-items-center justify-content-center" aria-label="Attachments"><svg class="ic ic-l"><use href="#clips"/></svg></button>
        <button class="d-flex align-items-center justify-content-center" aria-label="Cloud"><svg class="ic ic-l"><use href="#cloud"/></svg></button>
        <button class="d-flex align-items-center justify-content-center" aria-label="Issues"><svg class="ic ic-l"><use href="#warn"/></svg></button>
        <button class="on d-flex align-items-center justify-content-center" aria-label="Assembly inspect"><svg class="ic ic-xl"><use href="#inspect"/></svg></button>
      </div>
    </div>
  </aside>
</div>

<footer class="status d-flex align-items-center flex-shrink-0">
  <button class="lay on d-flex align-items-center gap-1"><svg class="ic" style="width:8px"><use href="#win"/></svg>Model</button>
  <button class="lay">Layout1</button><button class="lay ps-1">Layout2</button>
  <button class="lay" aria-label="New layout"><svg class="ic ic-s"><use href="#plus"/></svg></button>
  <button class="lay" aria-label="Layouts"><svg class="ic" style="width:8px"><use href="#menu"/></svg></button>
  <div class="ms-auto d-flex align-items-center" style="gap:2px">
    <button class="tg d-flex align-items-center"><svg class="ic"><use href="#win"/></svg>TILE<svg class="ic ic-s ms-1"><use href="#down"/></svg></button>
    <button class="tg d-flex align-items-center ms-1"><svg class="ic"><use href="#axes"/></svg>1:1<svg class="ic ic-s ms-1"><use href="#down"/></svg></button>
    <button class="tg d-flex align-items-center"><svg class="ic"><use href="#grid"/></svg>GRID</button>
    <button class="tg on d-flex align-items-center pe-0"><svg class="ic"><use href="#snap"/></svg>SNAP<span class="ch d-flex align-items-center"><svg class="ic ic-s"><use href="#down"/></svg></span></button>
    <button class="tg d-flex align-items-center"><svg class="ic"><use href="#ortho"/></svg>ORTHO</button>
    <button class="tg on d-flex align-items-center pe-0"><svg class="ic"><use href="#polar"/></svg>POLAR<span class="ch d-flex align-items-center"><svg class="ic ic-s"><use href="#down"/></svg></span></button>
    <button class="tg on d-flex align-items-center"><svg class="ic"><use href="#strack"/></svg>STRACK</button>
    <button class="tg on d-flex align-items-center pe-0"><svg class="ic"><use href="#esnap"/></svg>ESNAP<span class="ch d-flex align-items-center"><svg class="ic ic-s"><use href="#down"/></svg></span></button>
    <button class="tg on d-flex align-items-center"><svg class="ic"><use href="#dyn"/></svg>DYN</button>
    <button class="tg on d-flex align-items-center pe-0"><svg class="ic"><use href="#quad"/></svg>QUAD<span class="ch d-flex align-items-center"><svg class="ic ic-s"><use href="#down"/></svg></span></button>
    <button class="tg d-flex align-items-center"><svg class="ic"><use href="#bulb"/></svg>HIDE ENTITIES</button>
    <button class="tg" aria-label="Scroll left" style="color:#6a6d72"><svg class="ic ic-s"><use href="#left"/></svg></button>
    <button class="tg" aria-label="Scroll right"><svg class="ic ic-s"><use href="#right"/></svg></button>
    <button class="tg" aria-label="Notifications" style="color:#6a6d72"><svg class="ic"><use href="#bell"/></svg></button>
    <span class="grip ms-2"></span>
  </div>
</footer>
</div>
</div>
<script src="https://cdn.jsdelivr.net/npm/bootstrap@5.3.0/dist/js/bootstrap.bundle.min.js"></script>
</body>
</html>
